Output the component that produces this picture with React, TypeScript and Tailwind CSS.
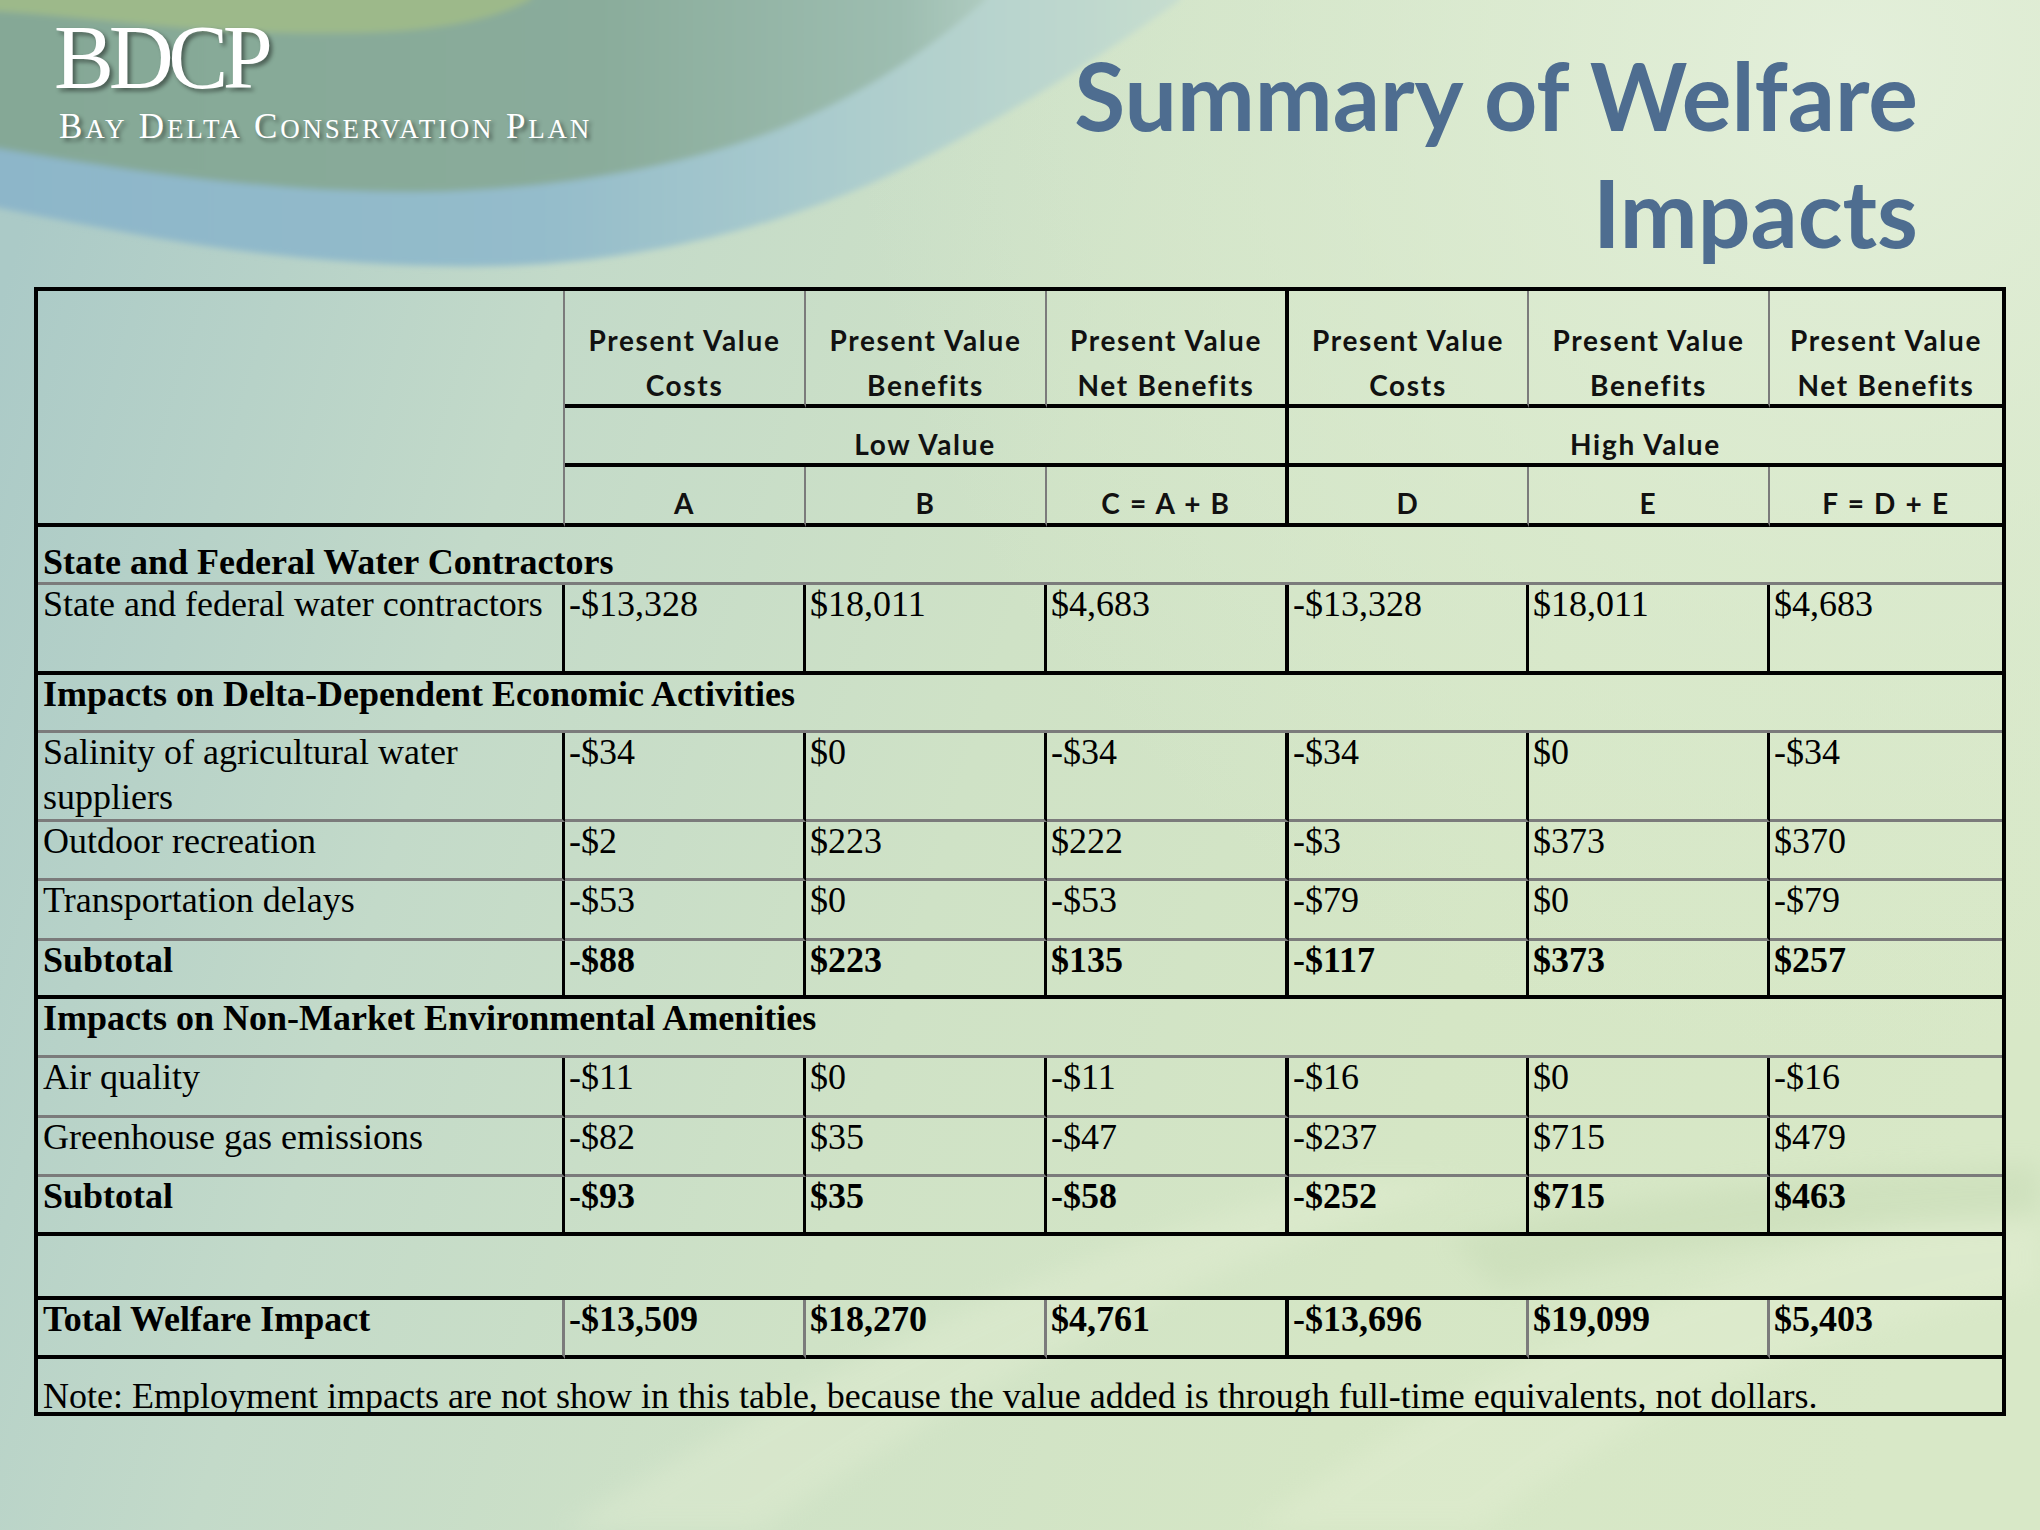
import React from "react";

const GRAY_B = "border-b-[3px] border-b-[#7b7b7b]";
const BLACK_B = "border-b-4 border-b-black";

type Row =
  | { kind: "section"; label: string; first?: boolean }
  | { kind: "data"; label: string; vals: string[]; bold?: boolean; bottom: "gray" | "black"; total?: boolean }
  | { kind: "empty" }
  | { kind: "note"; text: string };

const rows: Row[] = [
  { kind: "section", label: "State and Federal Water Contractors", first: true },
  {
    kind: "data",
    label: "State and federal water contractors",
    vals: ["-$13,328", "$18,011", "$4,683", "-$13,328", "$18,011", "$4,683"],
    bottom: "black",
  },
  { kind: "section", label: "Impacts on Delta-Dependent Economic Activities" },
  {
    kind: "data",
    label: "Salinity of agricultural water suppliers",
    vals: ["-$34", "$0", "-$34", "-$34", "$0", "-$34"],
    bottom: "gray",
  },
  {
    kind: "data",
    label: "Outdoor recreation",
    vals: ["-$2", "$223", "$222", "-$3", "$373", "$370"],
    bottom: "gray",
  },
  {
    kind: "data",
    label: "Transportation delays",
    vals: ["-$53", "$0", "-$53", "-$79", "$0", "-$79"],
    bottom: "gray",
  },
  {
    kind: "data",
    label: "Subtotal",
    vals: ["-$88", "$223", "$135", "-$117", "$373", "$257"],
    bold: true,
    bottom: "black",
  },
  { kind: "section", label: "Impacts on Non-Market Environmental Amenities" },
  {
    kind: "data",
    label: "Air quality",
    vals: ["-$11", "$0", "-$11", "-$16", "$0", "-$16"],
    bottom: "gray",
  },
  {
    kind: "data",
    label: "Greenhouse gas emissions",
    vals: ["-$82", "$35", "-$47", "-$237", "$715", "$479"],
    bottom: "gray",
  },
  {
    kind: "data",
    label: "Subtotal",
    vals: ["-$93", "$35", "-$58", "-$252", "$715", "$463"],
    bold: true,
    bottom: "black",
  },
  { kind: "empty" },
  {
    kind: "data",
    label: "Total Welfare Impact",
    vals: ["-$13,509", "$18,270", "$4,761", "-$13,696", "$19,099", "$5,403"],
    bold: true,
    bottom: "black",
    total: true,
  },
  {
    kind: "note",
    text: "Note: Employment impacts are not show in this table, because the value added is through full-time equivalents, not dollars.",
  },
];

const headers = [
  ["Present Value", "Costs"],
  ["Present Value", "Benefits"],
  ["Present Value", "Net Benefits"],
  ["Present Value", "Costs"],
  ["Present Value", "Benefits"],
  ["Present Value", "Net Benefits"],
];
const letters = ["A", "B", "C = A + B", "D", "E", "F = D + E"];

function headerRight(i: number) {
  if (i === 2) return "border-r-4 border-r-black";
  if (i === 5) return "";
  return "border-r-2 border-r-[#7b7b7b]";
}

function dataRight(i: number, total?: boolean) {
  if (i === 2) return "border-r-4 border-r-black";
  if (i === 5) return "";
  return total ? "border-r-[3px] border-r-[#7b7b7b]" : "border-r-[3px] border-r-black";
}

const serif = "font-['Liberation_Serif',serif] text-[36px] leading-[45px] text-black";
const sans = "font-['Lato',sans-serif] font-bold text-[28px] leading-[45px] tracking-[0.06em] text-[#111]";

function Background() {
  return (
    <svg
      className="absolute inset-0"
      width="2040"
      height="1530"
      viewBox="0 0 2040 1530"
      xmlns="http://www.w3.org/2000/svg"
    >
      <defs>
        <linearGradient id="base" x1="0" y1="300" x2="2040" y2="900" gradientUnits="userSpaceOnUse">
          <stop offset="0" stopColor="#abcac7" />
          <stop offset="0.25" stopColor="#c3dac9" />
          <stop offset="0.5" stopColor="#cfe2c6" />
          <stop offset="0.75" stopColor="#d5e6c5" />
          <stop offset="1" stopColor="#d8e8c7" />
        </linearGradient>
        <radialGradient id="hl" cx="1850" cy="60" r="1000" gradientUnits="userSpaceOnUse">
          <stop offset="0" stopColor="#e3efda" stopOpacity="1" />
          <stop offset="0.6" stopColor="#dcebd1" stopOpacity="0.5" />
          <stop offset="1" stopColor="#dcebd1" stopOpacity="0" />
        </radialGradient>
        <linearGradient id="blue" x1="0" y1="0" x2="1200" y2="0" gradientUnits="userSpaceOnUse">
          <stop offset="0" stopColor="#8db6c9" />
          <stop offset="0.45" stopColor="#94bccb" />
          <stop offset="0.7" stopColor="#abcccd" />
          <stop offset="1" stopColor="#c8decf" />
        </linearGradient>
        <linearGradient id="green" x1="0" y1="0" x2="1000" y2="0" gradientUnits="userSpaceOnUse">
          <stop offset="0" stopColor="#85a896" />
          <stop offset="0.6" stopColor="#8aac9b" />
          <stop offset="0.9" stopColor="#9dbdb0" />
          <stop offset="1" stopColor="#b1cdc2" />
        </linearGradient>
        <filter id="soft" x="-10%" y="-10%" width="120%" height="120%">
          <feGaussianBlur stdDeviation="3" />
        </filter>
        <filter id="softer" x="-10%" y="-10%" width="120%" height="120%">
          <feGaussianBlur stdDeviation="12" />
        </filter>
      </defs>
      <rect width="2040" height="1530" fill="url(#base)" />
      <rect width="2040" height="1530" fill="url(#hl)" />
      <g filter="url(#softer)" opacity="0.35">
        <path d="M560,1530 C800,1380 1050,1250 1350,1180 L1480,1180 C1200,1260 950,1400 760,1530 Z" fill="#e6f0d6" />
        <path d="M1250,1530 C1400,1420 1600,1300 1900,1230 L2040,1220 L2040,1290 C1800,1330 1600,1430 1480,1530 Z" fill="#e6f0d6" />
        <path d="M1450,1240 C1650,1190 1850,1170 2040,1165 L2040,1215 C1850,1225 1650,1250 1500,1290 Z" fill="#c0d5ae" />
      </g>
      <g filter="url(#soft)">
        <path
          d="M-20,-20 L1180,-20 L1180,0 C1110,50 1020,110 900,170 C780,228 640,262 500,266 C380,269 250,255 140,235 C80,224 30,214 -20,204 Z"
          fill="url(#blue)"
        />
        <path
          d="M-20,-20 L990,-20 L985,0 C940,40 880,85 800,120 C700,165 560,190 420,192 C300,193 180,178 80,162 C40,156 10,150 -20,146 Z"
          fill="url(#green)"
        />
        <path
          d="M-20,-20 L540,-20 L530,0 C500,16 460,26 400,31 C320,36 220,32 140,24 C80,18 30,13 -20,10 Z"
          fill="#9db98a"
        />
      </g>
    </svg>
  );
}

function Table() {
  const cells: React.ReactNode[] = [];
  cells.push(
    <div key="hl" className="row-span-3 border-r-2 border-r-[#7b7b7b] border-b-4 border-b-black" />
  );
  headers.forEach((h, i) => {
    cells.push(
      <div
        key={"h" + i}
        className={`flex flex-col items-center pt-[27px] border-b-4 border-b-black ${headerRight(i)} ${sans}`}
      >
        <div>{h[0]}</div>
        <div>{h[1]}</div>
      </div>
    );
  });
  cells.push(
    <div
      key="low"
      className={`col-span-3 flex justify-center pt-[14px] border-b-4 border-b-black border-r-4 border-r-black ${sans}`}
    >
      Low Value
    </div>
  );
  cells.push(
    <div key="high" className={`col-span-3 flex justify-center pt-[14px] border-b-4 border-b-black ${sans}`}>
      High Value
    </div>
  );
  letters.forEach((l, i) => {
    cells.push(
      <div
        key={"l" + i}
        className={`flex justify-center pt-[14px] border-b-4 border-b-black ${headerRight(i)} ${sans}`}
      >
        {l}
      </div>
    );
  });

  rows.forEach((r, ri) => {
    if (r.kind === "section") {
      cells.push(
        <div
          key={"s" + ri}
          className={`col-span-7 pl-[5px] ${r.first ? "pt-[16px]" : "pt-0"} ${GRAY_B} ${serif} font-bold`}
        >
          <div className="-mt-[3px]">{r.label}</div>
        </div>
      );
    } else if (r.kind === "empty") {
      cells.push(<div key={"e" + ri} className={`col-span-7 ${BLACK_B}`} />);
    } else if (r.kind === "note") {
      cells.push(
        <div key={"n" + ri} className={`col-span-7 pl-[5px] pt-[18px] whitespace-nowrap ${serif}`}>
          <div className="-mt-[3px]">{r.text}</div>
        </div>
      );
    } else {
      const bottom = r.bottom === "black" ? BLACK_B : GRAY_B;
      const weight = r.bold ? "font-bold" : "font-normal";
      cells.push(
        <div
          key={"d" + ri}
          className={`pl-[5px] pr-[4px] ${bottom} ${
            r.total ? "border-r-[3px] border-r-[#7b7b7b]" : "border-r-[3px] border-r-black"
          } ${serif} ${weight}`}
        >
          <div className="-mt-[3px]">{r.label}</div>
        </div>
      );
      r.vals.forEach((v, vi) => {
        cells.push(
          <div
            key={"d" + ri + "-" + vi}
            className={`pl-[4px] ${bottom} ${dataRight(vi, r.total)} ${serif} ${weight}`}
          >
            <div className="-mt-[3px]">{v}</div>
          </div>
        );
      });
    }
  });

  return (
    <div className="ml-[34px] w-[1972px] border-4 border-black">
      <div className="grid grid-cols-[527px_241px_241px_242px_240px_241px_232px] grid-rows-[117px_59px_60px_58px_90px_58px_89px_59px_60px_58px_59px_60px_59px_59px_64px_59px_53px]">
        {cells}
      </div>
    </div>
  );
}

export default function App() {
  return (
    <div className="relative w-[2040px] h-[1530px] overflow-hidden">
      <Background />
      <div className="relative">
        <header className="flex h-[287px] justify-between">
          <div className="pl-[54px] pt-[13px] text-white font-['Liberation_Serif',serif] [text-shadow:3px_3px_4px_rgba(0,0,0,0.45)]">
            <div className="text-[90px] leading-[90px] tracking-[-0.06em]">BDCP</div>
            <div className="mt-[6px] ml-[5px] text-[35px] leading-[35px] tracking-[2.8px] whitespace-nowrap">
              B<span className="text-[27px]">AY</span> D<span className="text-[27px]">ELTA</span> C
              <span className="text-[27px]">ONSERVATION</span> P<span className="text-[27px]">LAN</span>
            </div>
          </div>
          <div className="pr-[122px] pt-[37px] text-right font-['Lato',sans-serif] font-bold text-[93px] leading-[117px] text-[#4e6d90] whitespace-nowrap">
            <div>Summary of Welfare</div>
            <div>Impacts</div>
          </div>
        </header>
        <Table />
      </div>
    </div>
  );
}
